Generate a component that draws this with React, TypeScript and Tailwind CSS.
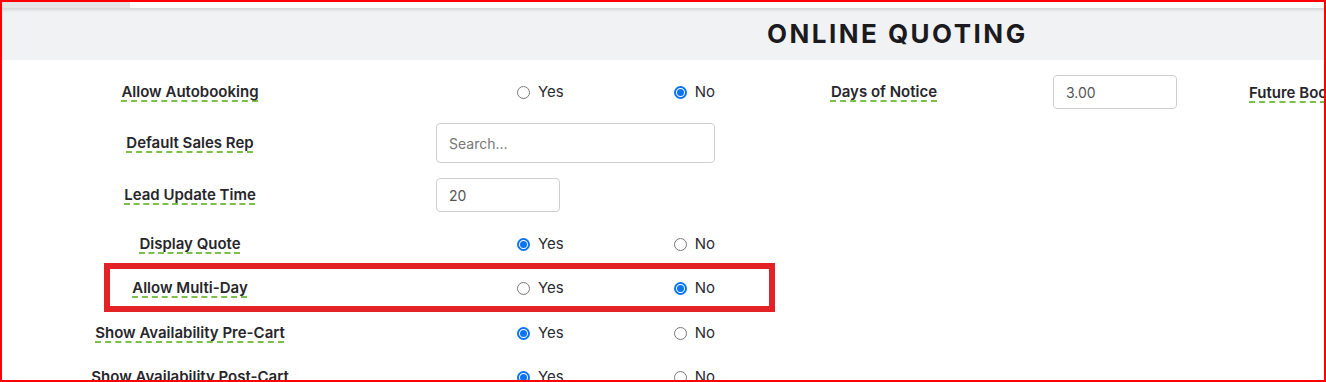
import React from "react";

const labelCls =
  "text-[15px] font-semibold text-[#26262b] underline decoration-dashed decoration-[#7cc04b] decoration-2 underline-offset-[4px] whitespace-nowrap";

function Label({ text }: { text: string }) {
  return (
    <div className="w-[376px] shrink-0 flex justify-center">
      <span className={labelCls}>{text}</span>
    </div>
  );
}

function Radio({ checked }: { checked: boolean }) {
  return checked ? (
    <span className="w-[13px] h-[13px] rounded-full border-2 border-[#0b74f0] flex items-center justify-center bg-white">
      <span className="w-[7px] h-[7px] rounded-full bg-[#0b74f0]" />
    </span>
  ) : (
    <span className="w-[13px] h-[13px] rounded-full border border-[#777] bg-white" />
  );
}

function RadioPair({ yes }: { yes: boolean }) {
  return (
    <div className="w-[279px] shrink-0 flex items-center text-[15px] text-[#2a2a33]">
      <div className="ml-[81px] flex items-center gap-[8px]">
        <Radio checked={yes} />
        <span>Yes</span>
      </div>
      <div className="ml-[110px] flex items-center gap-[8px]">
        <Radio checked={!yes} />
        <span>No</span>
      </div>
    </div>
  );
}

export default function App() {
  return (
    <div
      className="w-[1326px] h-[382px] overflow-hidden bg-white border-2 border-[#ff0000] box-border"
      style={{ fontFamily: "Inter, 'Noto Sans', sans-serif" }}
    >
      <div className="w-[1800px]">
        {/* top strip */}
        <div className="h-[6px] flex">
          <div className="w-[128px] bg-[#e6e6e6]" />
          <div className="flex-1 bg-white" />
        </div>
        {/* header band */}
        <div className="h-[52px] bg-[#f1f2f4] shadow-[inset_0_3px_3px_-1px_rgba(0,0,0,0.12)] flex items-center">
          <h1 className="ml-[765px] text-[26px] font-bold tracking-[0.095em] text-[#1b1b1f] leading-none">
            ONLINE QUOTING
          </h1>
        </div>

        {/* row 1 */}
        <div className="mt-[15px] h-[34px] flex items-center">
          <Label text="Allow Autobooking" />
          <div className="ml-[58px] flex items-center">
            <RadioPair yes={false} />
          </div>
          <div className="ml-[76px] w-[186px] flex justify-center">
            <span className={labelCls}>Days of Notice</span>
          </div>
          <div className="ml-[76px] w-[124px] h-[34px] rounded-[4px] border border-[#cfcfcf] flex items-center px-[12px] text-[14px] text-[#555]">
            3.00
          </div>
          <div className="ml-[72px]">
            <span className={labelCls}>Future Booking Limit</span>
          </div>
        </div>

        {/* row 2 */}
        <div className="mt-[14px] h-[40px] flex items-center">
          <Label text="Default Sales Rep" />
          <div className="ml-[58px] w-[279px] h-[40px] rounded-[4px] border border-[#cfcfcf] flex items-center px-[12px] text-[14px] text-[#777]">
            Search...
          </div>
        </div>

        {/* row 3 */}
        <div className="mt-[15px] h-[34px] flex items-center">
          <Label text="Lead Update Time" />
          <div className="ml-[58px] w-[124px] h-[34px] rounded-[4px] border border-[#cfcfcf] flex items-center px-[12px] text-[14px] text-[#555]">
            20
          </div>
        </div>

        {/* row 4 */}
        <div className="mt-[15px] h-[34px] flex items-center">
          <Label text="Display Quote" />
          <div className="ml-[58px]">
            <RadioPair yes={true} />
          </div>
        </div>

        {/* row 5 (highlighted) */}
        <div className="relative mt-[10px] h-[34px] flex items-center">
          <div className="absolute left-[102px] top-[-8px] w-[671px] h-[49px] border-[6px] border-[#e32227]" />
          <Label text="Allow Multi-Day" />
          <div className="ml-[58px]">
            <RadioPair yes={false} />
          </div>
        </div>

        {/* row 6 */}
        <div className="mt-[11px] h-[34px] flex items-center">
          <Label text="Show Availability Pre-Cart" />
          <div className="ml-[58px]">
            <RadioPair yes={true} />
          </div>
        </div>

        {/* row 7 */}
        <div className="mt-[10px] h-[34px] flex items-center">
          <Label text="Show Availability Post-Cart" />
          <div className="ml-[58px]">
            <RadioPair yes={true} />
          </div>
        </div>
      </div>
    </div>
  );
}
